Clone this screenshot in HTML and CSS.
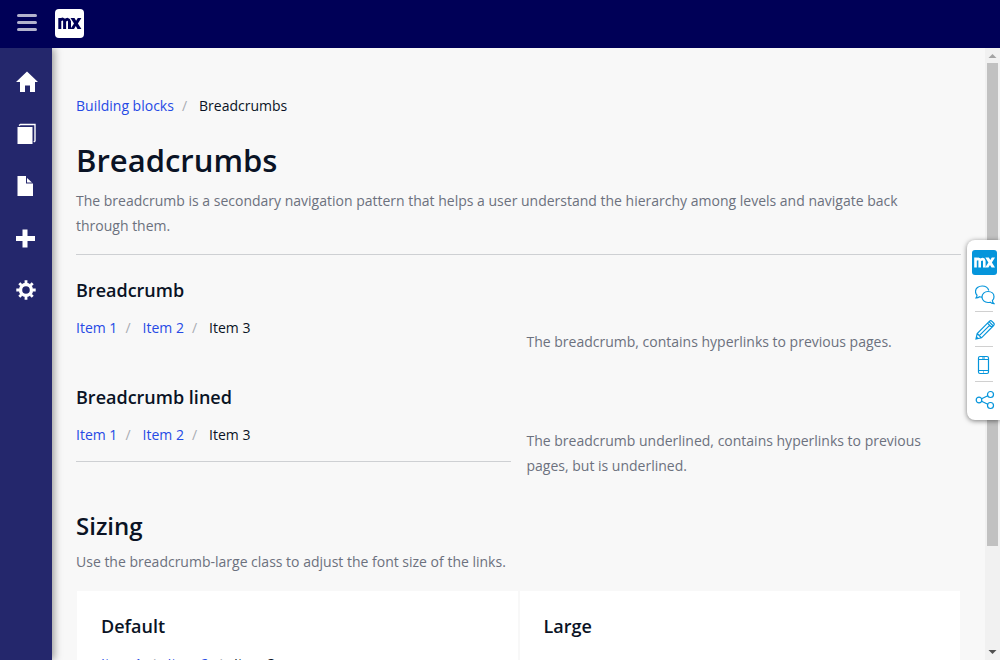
FILE: index.html
```html
<!DOCTYPE html>
<html lang="en">
<head>
<meta charset="utf-8">
<meta name="viewport" content="width=device-width, initial-scale=1">
<title>Breadcrumbs</title>
<link rel="stylesheet" href="styles.css">
</head>
<body>
<div class="app">
  <header class="topbar">
    <button class="icon-button menu-toggle" type="button" aria-label="Toggle menu">
      <svg width="20" height="18" viewBox="0 0 20 18" fill="currentColor"><rect width="20" height="3" rx="1.500"/><rect y="7" width="20" height="3" rx="1.500"/><rect y="14" width="20" height="3" rx="1.500"/></svg>
    </button>
    <a class="logo" href="#" aria-label="Home"><svg width="29" height="29" viewBox="0 0 29 29"><rect width="29" height="29" rx="4" fill="#fff"/><path d="M4.800 20V9M4.800 11.500q4-3 4.800.5v8M9.600 12q4-3.500 4.900.5V20" fill="none" stroke="#000057" stroke-width="3"/><path d="M15.500 9h4l1.600 2.800L22.800 9h3.600l-3.500 5.500 3.500 5.500h-3.900l-1.700-2.900-1.800 2.900h-3.600l3.600-5.500z" fill="#000057"/></svg></a>
  </header>
  <div class="body">
    <nav class="sidebar" aria-label="Main">
      <a href="#" aria-label="Home"><svg width="22" height="22" viewBox="0 0 22 22" fill="#fff"><path d="M11 0.500 22 11h-3v10h-5v-6.500H9V21H4V11H0z"/></svg></a>
      <a href="#" aria-label="Layouts"><svg width="22" height="22" viewBox="0 0 22 22" fill="#fff"><path d="M1.500 4h15v17h-15z"/><path d="M3 2.500 4.500 1.500H19V18l-1.200 1" fill="none" stroke="#fff" stroke-width="1.400"/></svg></a>
      <a href="#" aria-label="Pages"><svg width="22" height="22" viewBox="0 0 22 22" fill="#fff"><path d="M1.500 1H10v7.500h7V21H1.500z"/><path d="M11 3v4.500h5z"/></svg></a>
      <a href="#" aria-label="Add"><svg width="22" height="22" viewBox="0 0 22 22" fill="#fff"><path d="M6.500 2.500h5v6.500H19v5h-7.500v6.500h-5V14H0V9h6.500z"/></svg></a>
      <a href="#" aria-label="Settings"><svg width="22" height="22" viewBox="0 0 22 22" fill="none" stroke="#fff"><circle cx="10" cy="11" r="5.500" stroke-width="3.400"/><path d="M10 1.300v3M10 17.700v3M.3 11h3M16.700 11h3M3.300 4.300l2 2M14.700 15.700l2 2M3.300 17.700l2-2M14.700 6.300l2-2" stroke-width="2.800"/></svg></a>
    </nav>
    <main class="content">
      <nav aria-label="Page location">
        <ol class="breadcrumb"><li><a href="#">Building blocks</a></li><li aria-current="page">Breadcrumbs</li></ol>
      </nav>
      <section class="page-header">
        <h1>Breadcrumbs</h1>
        <p>The breadcrumb is a secondary navigation pattern that helps a user understand the hierarchy among levels and navigate back through them.</p>
      </section>
      <section class="example">
        <div>
          <h3>Breadcrumb</h3>
          <ol class="breadcrumb"><li><a href="#">Item 1</a></li><li><a href="#">Item 2</a></li><li>Item 3</li></ol>
        </div>
        <p>The breadcrumb, contains hyperlinks to previous pages.</p>
      </section>
      <section class="example example-lined">
        <div>
          <h3>Breadcrumb lined</h3>
          <ol class="breadcrumb breadcrumb-lined"><li><a href="#">Item 1</a></li><li><a href="#">Item 2</a></li><li>Item 3</li></ol>
        </div>
        <p>The breadcrumb underlined, contains hyperlinks to previous pages, but is underlined.</p>
      </section>
      <section class="sizing">
        <h2>Sizing</h2>
        <p>Use the breadcrumb-large class to adjust the font size of the links.</p>
        <div class="cards">
          <div class="card">
            <h3>Default</h3>
            <ol class="breadcrumb"><li><a href="#">Item 1</a></li><li><a href="#">Item 2</a></li><li>Item 3</li></ol>
          </div>
          <div class="card">
            <h3>Large</h3>
            <ol class="breadcrumb breadcrumb-large"><li><a href="#">Item 1</a></li><li><a href="#">Item 2</a></li><li>Item 3</li></ol>
          </div>
        </div>
      </section>
    </main>
    <div class="scrollbar" aria-hidden="true">
      <svg width="15" height="15" viewBox="0 0 15 15"><path d="M3.500 10 7.500 6l4 4z" fill="#a3a3a3"/></svg>
      <div class="track"><div class="thumb"></div></div>
      <svg width="15" height="15" viewBox="0 0 15 15"><path d="M3.500 5h8l-4 4z" fill="#505050"/></svg>
    </div>
  </div>
  <aside class="tools" aria-label="Tools">
    <a href="#" aria-label="Mendix"><svg width="26" height="25" viewBox="0 0 26 25"><rect width="25" height="25" rx="3" fill="#0595db"/><path d="M3.500 17.500V7.500M3.500 10q3.500-2.500 4.200.5v7M7.700 10.500q3.800-3 4.600.5v6.500" fill="none" stroke="#fff" stroke-width="2.600"/><path d="M13.300 7.500h3.500l1.500 2.500 1.500-2.500H23l-3.100 5 3.100 5h-3.500L18 14.900l-1.600 2.600h-3.200l3.200-5z" fill="#fff"/></svg></a>
    <button class="icon-button" type="button" aria-label="Feedback"><svg width="20" height="20" viewBox="0 0 20 20"><path d="M7 12.200q-1.500 0-2.500-.4-1.500 1.300-3.500 1.200Q2 12 2 10.200.5 8.800.5 6.500C.5 3.200 3.500 1 7.200 1 10.500 1 13 2.800 13.800 5.500"/><path d="M13 6.500c3.500 0 6 2.200 6 5.200 0 1.800-.6 3-1.600 3.800.1 1.500.6 2.500 1.600 3.200q-2.500 0-3.800-1.500-1 .3-2.200.3c-3.500 0-6-2.500-6-5.600 0-3 2.500-5.400 6-5.400z"/></svg></button>
    <button class="icon-button" type="button" aria-label="Edit"><svg width="20" height="20" viewBox="0 0 20 20"><path d="M1 19l1.200-5.500L14.500 1.200q1.300-1 2.500.2l1.600 1.600q1.200 1.200 0 2.500L6.500 17.800zM2.200 13.500l4.300 4.300M12.500 3.200l4.300 4.300M14 1.700 18.300 6M4.300 15.600 14.600 5.300M1.400 17l1.600 1.500"/></svg></button>
    <button class="icon-button" type="button" aria-label="Mobile view"><svg width="20" height="20" viewBox="0 0 20 20"><rect x="3.500" y="1.500" width="10" height="17" rx="1.500"/><path d="M3.500 4.500h10M3.500 15.500h10M7 3h3M8 17h1"/></svg></button>
    <button class="icon-button" type="button" aria-label="Share"><svg width="20" height="20" viewBox="0 0 20 20"><circle cx="4" cy="10" r="2.800"/><circle cx="15.500" cy="4.500" r="3"/><circle cx="15.500" cy="15.500" r="3"/><path d="M6.600 8.800l6.200-3M6.600 11.200l6.200 3"/></svg></button>
  </aside>
</div>
</body>
</html>
```
FILE: styles.css
```css
* { box-sizing: border-box; }
body {
  margin: 0;
  font: 14px/25px "Open Sans", sans-serif;
  color: #0a1325;
  background: #f8f8f8;
}
h1, h2, h3, p, ol { margin: 0; padding: 0; }
h1, h2, h3 { font-weight: 600; }
h1 { font-size: 31px; line-height: 40px; }
h2 { font-size: 24px; line-height: 32px; }
h3 { font-size: 18px; line-height: 24px; }
p { color: #6c717e; }
a { color: #264ae5; text-decoration: none; }
svg { display: block; }
.app { display: flex; flex-direction: column; height: 100vh; overflow: hidden; }
.icon-button { padding: 0; border: 0; background: none; }
.topbar {
  display: flex;
  align-items: center;
  gap: 18px;
  flex: 0 0 48px;
  padding: 0 17px 2px;
  background: #000057;
}
.menu-toggle { color: #b2b2cd; }
.body { display: flex; flex: 1; min-height: 0; }
.sidebar {
  display: flex;
  flex-direction: column;
  gap: 30px;
  flex: 0 0 52px;
  padding: 23px 0 23px 16px;
  background: #24276c;
  box-shadow: 2px 0 8px rgba(0, 0, 0, 0.4);
  clip-path: inset(0 -16px 0 0);
}
.content { flex: 1; min-width: 0; overflow: hidden; padding: 45px 24px; }
.breadcrumb { display: flex; list-style: none; line-height: 25px; }
.breadcrumb li + li::before {
  content: "/";
  padding: 0 12px 0 8px;
  color: #a9acb3;
}
.page-header {
  margin-top: 22px;
  padding-bottom: 16px;
  border-bottom: 1px solid #ced0d3;
}
.page-header p { max-width: 860px; margin-top: 8px; }
.example {
  display: grid;
  grid-template-columns: 1fr 1fr;
  column-gap: 16px;
  align-items: start;
  padding-top: 23px;
}
.example .breadcrumb { margin-top: 13px; padding-bottom: 22px; }
.example > p { padding-top: 51px; }
.example-lined > p { padding-top: 43px; }
.example .breadcrumb-lined { padding-bottom: 14px; border-bottom: 1px solid #ced0d3; }
.sizing { padding-top: 32px; }
.sizing > p { margin-top: 7px; }
.cards { display: grid; grid-template-columns: 1fr 1fr; margin-top: 17px; }
.card { margin: 0 1px; padding: 23px 24px 24px; background: #fff; }
.card .breadcrumb { margin-top: 13px; }
.card .breadcrumb-large { margin-top: 20px; font-size: 18px; }
.scrollbar { display: flex; flex-direction: column; flex: 0 0 15px; background: #f1f1f1; }
.track { flex: 1; padding: 0 2px; }
.thumb { height: 83%; background: #c1c1c1; }
.tools {
  position: fixed;
  right: 0;
  top: 240px;
  display: flex;
  flex-direction: column;
  width: 33px;
  padding: 10px 0 4px 5px;
  border-radius: 8px 0 0 8px;
  background: #fff;
  box-shadow: 0 1px 5px rgba(0, 0, 0, 0.5);
}
.tools > a { margin-bottom: 2px; }
.tools .icon-button {
  width: 18px;
  margin-left: 3px;
  padding: 8px 0 6px;
  border-bottom: 1px solid #d0d0d0;
}
.tools .icon-button:last-child { border-bottom: 0; }
.tools .icon-button svg { fill: none; stroke: #0595db; stroke-width: 1.2; }
```
